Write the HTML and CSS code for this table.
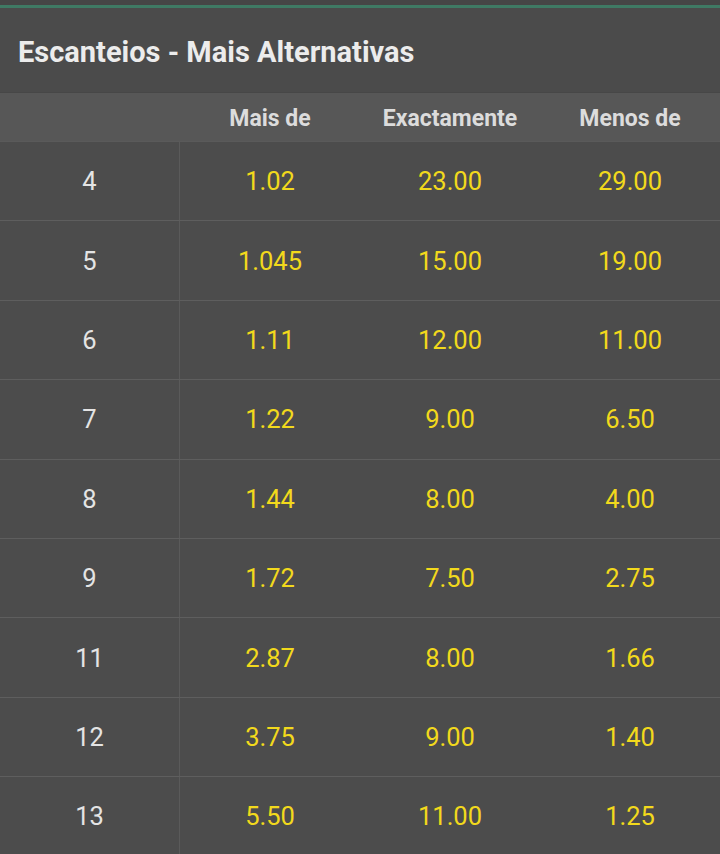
FILE: index.html
```html
<!DOCTYPE html>
<html>
<head>
<meta charset="utf-8">
<link rel="stylesheet" href="styles.css">
</head>
<body>
<div class="page">
  <div class="topline"></div>
  <div class="title">Escanteios - Mais Alternativas</div>
  <div class="row head">
    <div class="cell label"></div>
    <div class="cell">Mais de</div>
    <div class="cell">Exactamente</div>
    <div class="cell">Menos de</div>
  </div>
  <div class="row"><div class="cell label">4</div><div class="cell odd">1.02</div><div class="cell odd">23.00</div><div class="cell odd">29.00</div></div>
  <div class="row"><div class="cell label">5</div><div class="cell odd">1.045</div><div class="cell odd">15.00</div><div class="cell odd">19.00</div></div>
  <div class="row"><div class="cell label">6</div><div class="cell odd">1.11</div><div class="cell odd">12.00</div><div class="cell odd">11.00</div></div>
  <div class="row"><div class="cell label">7</div><div class="cell odd">1.22</div><div class="cell odd">9.00</div><div class="cell odd">6.50</div></div>
  <div class="row"><div class="cell label">8</div><div class="cell odd">1.44</div><div class="cell odd">8.00</div><div class="cell odd">4.00</div></div>
  <div class="row"><div class="cell label">9</div><div class="cell odd">1.72</div><div class="cell odd">7.50</div><div class="cell odd">2.75</div></div>
  <div class="row"><div class="cell label">11</div><div class="cell odd">2.87</div><div class="cell odd">8.00</div><div class="cell odd">1.66</div></div>
  <div class="row"><div class="cell label">12</div><div class="cell odd">3.75</div><div class="cell odd">9.00</div><div class="cell odd">1.40</div></div>
  <div class="row"><div class="cell label">13</div><div class="cell odd">5.50</div><div class="cell odd">11.00</div><div class="cell odd">1.25</div></div>
</div>
</body>
</html>
```
FILE: styles.css
```css
html, body {
  margin: 0;
  padding: 0;
  background: #4c4c4c;
}
.page {
  width: 720px;
  height: 854px;
  overflow: hidden;
  font-family: Roboto, "Liberation Sans", sans-serif;
  background: #4c4c4c;
  border-top: 5px solid #464646;
}
.topline {
  height: 3px;
  background: #3f7a64;
}
.title {
  height: 85px;
  box-sizing: border-box;
  padding-left: 18px;
  display: flex;
  align-items: center;
  padding-top: 3px;
  font-size: 29px;
  font-weight: 700;
  color: #ececec;
  background: #4b4b4b;
  border-bottom: 1px solid #474747;
}
.row {
  display: grid;
  grid-template-columns: 180px 180px 180px 180px;
  height: 79.4px;
  box-sizing: border-box;
  border-bottom: 1px solid #5e5e5e;
}
.row.head {
  height: 49px;
  background: #575757;
  border-bottom: 1px solid #5a5a5a;
}
.cell {
  display: flex;
  align-items: center;
  justify-content: center;
  font-size: 25.5px;
  color: #e4e4e4;
}
.head .cell {
  font-size: 23px;
  font-weight: 700;
  color: #dcdcdc;
  padding-top: 3px;
}
.row .label {
  border-right: 1px solid #5a5a5a;
  box-sizing: border-box;
}
.head .label {
  border-right: none;
}
.odd {
  color: #f2d91c;
}
```
